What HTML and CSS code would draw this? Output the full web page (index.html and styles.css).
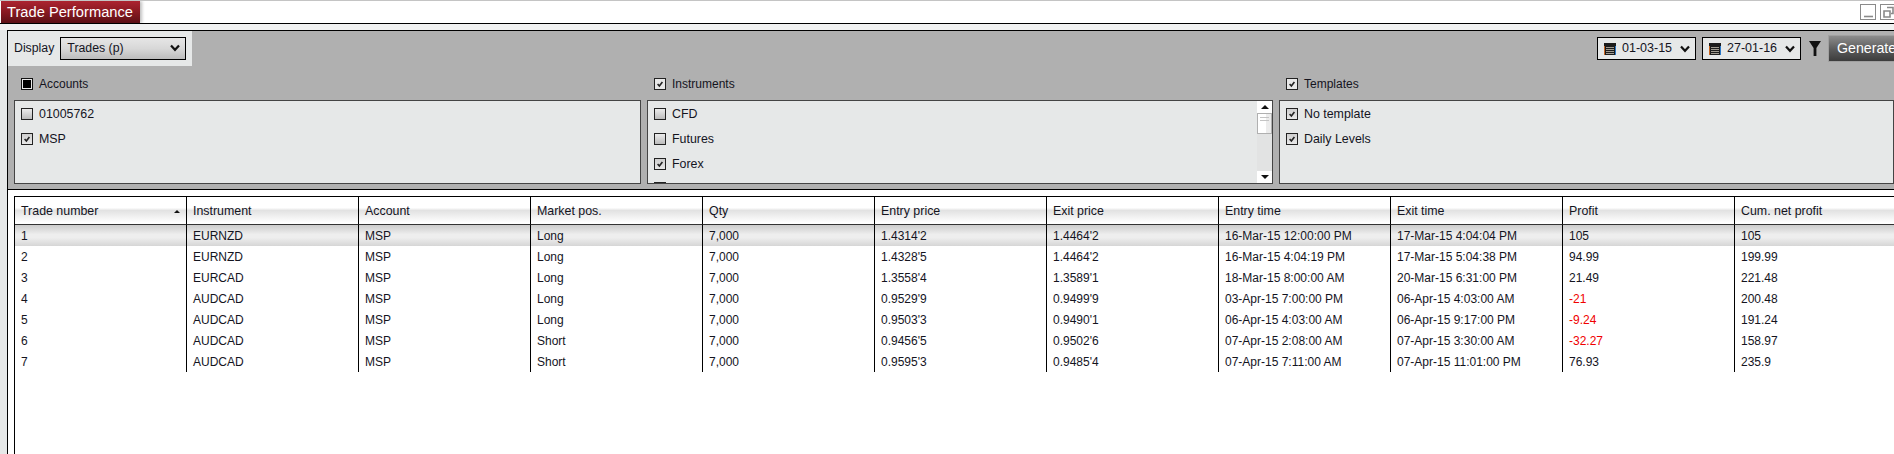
FILE: index.html
```html
<!DOCTYPE html>
<html lang="en">
<head>
<meta charset="utf-8">
<title>Trade Performance</title>
<link rel="stylesheet" href="styles.css">
</head>
<body>
<svg class="defs" width="0" height="0" aria-hidden="true">
  <symbol id="chev" viewBox="0 0 10 8"><path d="M1 1.5 5 5.8 9 1.5" fill="none" stroke="#111" stroke-width="2.2"/></symbol>
  <symbol id="cal" viewBox="0 0 12 12">
    <rect width="12" height="12" fill="#1c1c1c"/>
    <rect x="0" y="3" width="1" height="9" fill="#c8641e"/>
    <rect x="11" y="3" width="1" height="9" fill="#2a78c8"/>
    <path d="M2 4h8v1H2zM2 6h8v1H2zM2 8h8v1H2zM2 10h8v1H2z" fill="#e8e0d0"/>
    <path d="M3 4v7M5 4v7M7 4v7M9 4v7" stroke="#1c1c1c" stroke-width=".7"/>
  </symbol>
  <symbol id="tick" viewBox="0 0 10 10"><path d="M2 5 4.200 7.400 8 2.400" fill="none" stroke="#222" stroke-width="2"/></symbol>
</svg>

<header class="titlebar">
  <h1 class="tab">Trade Performance</h1>
  <div class="winbtns">
    <span class="winbtn"><svg width="13" height="13" viewBox="0 0 13 13"><path d="M2 10.500h9" stroke="#8a8a8a" stroke-width="1.600"/></svg></span>
    <span class="winbtn"><svg width="13" height="13" viewBox="0 0 13 13"><path d="M5 1.500h6v6H9M2 5h6v6H2z" fill="none" stroke="#8a8a8a" stroke-width="1.600"/></svg></span>
  </div>
</header>

<main class="main">
  <section class="filters">
    <div class="toolbar">
      <div class="display">
        <span>Display</span>
        <div class="select"><span>Trades (p)</span><svg class="chev"><use href="#chev"/></svg></div>
      </div>
      <div class="tools">
        <div class="datebox"><svg class="calicon"><use href="#cal"/></svg><span>01-03-15</span><svg class="chev"><use href="#chev"/></svg></div>
        <div class="datebox"><svg class="calicon"><use href="#cal"/></svg><span>27-01-16</span><svg class="chev"><use href="#chev"/></svg></div>
        <svg class="funnel" viewBox="0 0 12 15"><path d="M0 0h12L7.400 7v8H4.600V7z" fill="#111"/></svg>
        <div class="generate">Generate</div>
      </div>
    </div>
    <div class="groups">
      <div class="group">
        <label class="head"><i class="cb mixed"></i>Accounts</label>
        <div class="box">
          <ul class="items">
            <li><i class="cb"></i>01005762</li>
            <li><i class="cb on"><svg><use href="#tick"/></svg></i>MSP</li>
          </ul>
        </div>
      </div>
      <div class="group">
        <label class="head"><i class="cb plain"><svg><use href="#tick"/></svg></i>Instruments</label>
        <div class="box">
          <ul class="items">
            <li><i class="cb"></i>CFD</li>
            <li><i class="cb"></i>Futures</li>
            <li><i class="cb on"><svg><use href="#tick"/></svg></i>Forex</li>
            <li><i class="cb"></i></li>
          </ul>
          <div class="scrollbar">
            <span class="sbtn"><b class="up"></b></span>
            <span class="thumb"></span>
            <span class="track"></span>
            <span class="sbtn"><b class="down"></b></span>
          </div>
        </div>
      </div>
      <div class="group">
        <label class="head"><i class="cb plain"><svg><use href="#tick"/></svg></i>Templates</label>
        <div class="box">
          <ul class="items">
            <li><i class="cb on"><svg><use href="#tick"/></svg></i>No template</li>
            <li><i class="cb on"><svg><use href="#tick"/></svg></i>Daily Levels</li>
          </ul>
        </div>
      </div>
    </div>
  </section>

  <section class="results">
    <div class="gridwrap">
      <table class="grid">
        <thead>
          <tr>
            <th><div class="sorted">Trade number<b class="sortmark"></b></div></th>
            <th>Instrument</th><th>Account</th><th>Market pos.</th><th>Qty</th><th>Entry price</th><th>Exit price</th><th>Entry time</th><th>Exit time</th><th>Profit</th><th>Cum. net profit</th>
          </tr>
        </thead>
        <tbody>
          <tr class="selected"><td>1</td><td>EURNZD</td><td>MSP</td><td>Long</td><td>7,000</td><td>1.4314'2</td><td>1.4464'2</td><td>16-Mar-15 12:00:00 PM</td><td>17-Mar-15 4:04:04 PM</td><td>105</td><td>105</td></tr>
          <tr><td>2</td><td>EURNZD</td><td>MSP</td><td>Long</td><td>7,000</td><td>1.4328'5</td><td>1.4464'2</td><td>16-Mar-15 4:04:19 PM</td><td>17-Mar-15 5:04:38 PM</td><td>94.99</td><td>199.99</td></tr>
          <tr><td>3</td><td>EURCAD</td><td>MSP</td><td>Long</td><td>7,000</td><td>1.3558'4</td><td>1.3589'1</td><td>18-Mar-15 8:00:00 AM</td><td>20-Mar-15 6:31:00 PM</td><td>21.49</td><td>221.48</td></tr>
          <tr><td>4</td><td>AUDCAD</td><td>MSP</td><td>Long</td><td>7,000</td><td>0.9529'9</td><td>0.9499'9</td><td>03-Apr-15 7:00:00 PM</td><td>06-Apr-15 4:03:00 AM</td><td class="loss">-21</td><td>200.48</td></tr>
          <tr><td>5</td><td>AUDCAD</td><td>MSP</td><td>Long</td><td>7,000</td><td>0.9503'3</td><td>0.9490'1</td><td>06-Apr-15 4:03:00 AM</td><td>06-Apr-15 9:17:00 PM</td><td class="loss">-9.24</td><td>191.24</td></tr>
          <tr><td>6</td><td>AUDCAD</td><td>MSP</td><td>Short</td><td>7,000</td><td>0.9456'5</td><td>0.9502'6</td><td>07-Apr-15 2:08:00 AM</td><td>07-Apr-15 3:30:00 AM</td><td class="loss">-32.27</td><td>158.97</td></tr>
          <tr><td>7</td><td>AUDCAD</td><td>MSP</td><td>Short</td><td>7,000</td><td>0.9595'3</td><td>0.9485'4</td><td>07-Apr-15 7:11:00 AM</td><td>07-Apr-15 11:01:00 PM</td><td>76.93</td><td>235.9</td></tr>
        </tbody>
      </table>
    </div>
  </section>
</main>
</body>
</html>
```

FILE: styles.css
```css
* { box-sizing: border-box; }
html, body { margin: 0; height: 100%; }
body {
  width: 1894px;
  height: 454px;
  overflow: hidden;
  background: #f0f1f1;
  color: #14141e;
  font: 12px/1 "Liberation Sans", Arial, sans-serif;
}
.defs { display: block; height: 0; }

.titlebar {
  height: 24px;
  display: flex;
  justify-content: space-between;
  background: #fff;
  border-top: 1px solid #c4c4c4;
  border-bottom: 1px solid #000;
  padding-left: 1px;
  overflow: hidden;
}
.tab {
  margin: 0;
  width: 139px;
  height: 22px;
  padding-left: 6px;
  background: linear-gradient(#ac2430, #841820 55%, #5c1016);
  box-shadow: 2px 0 3px rgba(0, 0, 0, .25);
  color: #fff;
  font-size: 14.700px;
  font-weight: 400;
  line-height: 22px;
  white-space: nowrap;
}
.winbtns { display: flex; gap: 4px; margin: 3px -2px 0 0; }
.winbtn {
  width: 16px;
  height: 16px;
  border: 1px solid #8a8a8a;
  display: flex;
  align-items: center;
  justify-content: center;
}

.main {
  margin-top: 6px;
  height: 424px;
  background: #e6e8e8;
  padding-left: 7px;
}
.filters {
  height: 160px;
  border-top: 1px solid #000;
  border-left: 1px solid #000;
  border-bottom: 1px solid #000;
  background: #b0b0b0;
  overflow: hidden;
}

.toolbar {
  height: 47px;
  display: flex;
  justify-content: space-between;
  align-items: flex-start;
}
.display {
  width: 184px;
  height: 35px;
  background: #e6e8e8;
  padding-left: 6px;
  display: flex;
  align-items: center;
  gap: 6px;
  font-size: 12.300px;
}
.select {
  width: 126px;
  height: 23px;
  margin-top: -1px;
  border: 1px solid #000;
  background: linear-gradient(#e6e6e6, #d8d8d8 50%, #bcbcbc);
  padding: 0 5px 0 6px;
  display: flex;
  align-items: center;
  justify-content: space-between;
}
.chev { width: 10px; height: 8px; }

.tools {
  display: flex;
  align-items: flex-start;
  flex: none;
  width: 299px;
  margin-right: -2px;
  padding-top: 6px;
  font-size: 12.500px;
}
.datebox {
  flex: none;
  width: 99px;
  height: 23px;
  margin-right: 6px;
  border: 1px solid #000;
  background: #e6e8e8;
  padding: 0 5px 0 6px;
  display: flex;
  align-items: center;
  gap: 6px;
}
.datebox span { flex: 1; }
.calicon { width: 12px; height: 12px; flex: none; }
.funnel { flex: none; width: 12px; height: 15px; margin: 4px 7px 0 2px; }
.generate {
  flex: none;
  width: 80px;
  height: 27px;
  margin-top: -2px;
  border: 1px solid #a0a0a0;
  background: linear-gradient(#8c8c8c, #5a5a5a 55%, #3c3c3c);
  color: #fff;
  font-size: 14.200px;
  line-height: 25px;
  padding-left: 8px;
  white-space: nowrap;
}

.groups {
  display: grid;
  grid-template-columns: 627px 626px 1fr;
  column-gap: 6px;
  padding-left: 6px;
}
.head {
  height: 22px;
  padding-left: 7px;
  display: flex;
  align-items: flex-start;
  line-height: 12px;
}
.box {
  height: 84px;
  border: 1px solid #444;
  background: #e6e8e8;
  display: flex;
  overflow: hidden;
}
.items {
  list-style: none;
  margin: 0;
  padding: 7px 0 0 6px;
  flex: 1;
  font-size: 12.400px;
}
.items li {
  height: 24.800px;
  display: flex;
  align-items: flex-start;
  line-height: 12px;
}
.cb {
  flex: none;
  width: 12px;
  height: 12px;
  margin-right: 6px;
  border: 1px solid #222;
  background: linear-gradient(#ececec, #bcbcbc);
  display: flex;
  align-items: center;
  justify-content: center;
}
.cb svg { width: 8px; height: 8px; }
.cb.on { background: linear-gradient(#cfcfcf, #e8e8e8); }
.cb.plain { background: #e8e8e8; }
.cb.mixed { background: #000; border-color: #111; box-shadow: inset 0 0 0 1px #e8e8e8; }

.scrollbar {
  width: 15px;
  flex: none;
  display: flex;
  flex-direction: column;
  background: #e2e3e3;
}
.sbtn {
  height: 12px;
  flex: none;
  background: #fff;
  display: flex;
  align-items: center;
  justify-content: center;
}
.up, .down { width: 0; height: 0; border-left: 4px solid transparent; border-right: 4px solid transparent; }
.up { border-bottom: 4px solid #111; }
.down { border-top: 4px solid #111; }
.thumb {
  height: 21px;
  flex: none;
  border: 1px solid #b0b0b0;
  background:
    linear-gradient(#c4c4c4, #c4c4c4) 2px 3px / 9px 1px no-repeat,
    linear-gradient(#c4c4c4, #c4c4c4) 2px 6px / 9px 1px no-repeat,
    linear-gradient(90deg, #fff 65%, #ececec 65%);
}
.track { flex: 1; }

.results {
  height: 264px;
  border-left: 1px solid #000;
  background: #fff;
  padding: 6px 0 0 6px;
  overflow: hidden;
}
.gridwrap {
  height: 100%;
  border-left: 1px solid #000;
  border-top: 1px solid #000;
}
.grid {
  table-layout: fixed;
  width: 1892px;
  border-collapse: separate;
  border-spacing: 0;
  font-size: 12px;
}
.grid th, .grid td {
  width: 172px;
  padding: 1px 0 0 6px;
  text-align: left;
  font-weight: 400;
  white-space: nowrap;
  border-right: 1px solid #000;
}
.grid th {
  height: 28px;
  font-size: 12.400px;
  border-bottom: 1px solid #333;
  background: linear-gradient(#fff 40%, #e2e2e2 50%, #fff 95%);
}
.grid td { height: 21px; background: #fff; }
.selected td { background: linear-gradient(#cccccc, #eeeeee 45%, #eeeeee 60%, #d6d6d6); }
.grid td.loss { color: #f00000; }
.sorted { display: flex; justify-content: space-between; align-items: center; padding-right: 6px; }
.sortmark {
  width: 0;
  height: 0;
  border-left: 3.500px solid transparent;
  border-right: 3.500px solid transparent;
  border-bottom: 3.500px solid #111;
}
```
